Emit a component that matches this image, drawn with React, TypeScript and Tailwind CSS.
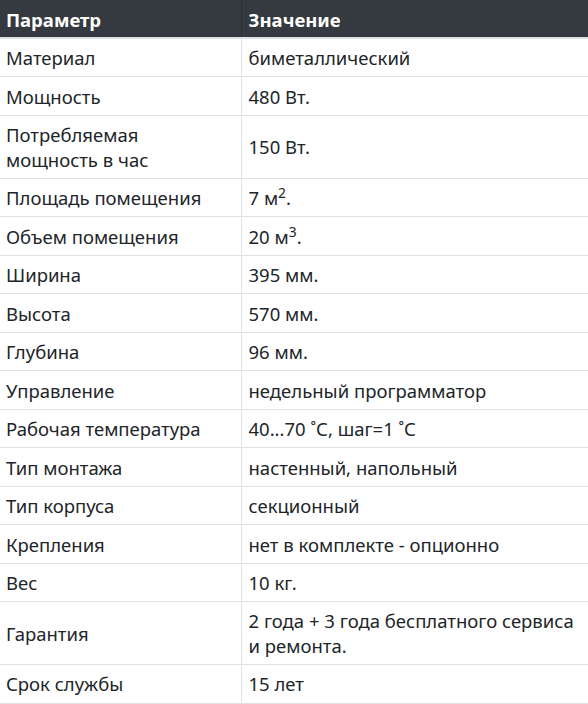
const rows: { name: string; value: React.ReactNode }[] = [
  { name: 'Материал', value: 'биметаллический' },
  { name: 'Мощность', value: '480 Вт.' },
  { name: 'Потребляемая мощность в час', value: '150 Вт.' },
  {
    name: 'Площадь помещения',
    value: (
      <>
        7 м<sup>2</sup>.
      </>
    ),
  },
  {
    name: 'Объем помещения',
    value: (
      <>
        20 м<sup>3</sup>.
      </>
    ),
  },
  { name: 'Ширина', value: '395 мм.' },
  { name: 'Высота', value: '570 мм.' },
  { name: 'Глубина', value: '96 мм.' },
  { name: 'Управление', value: 'недельный программатор' },
  { name: 'Рабочая температура', value: '40...70 ˚С, шаг=1 ˚С' },
  { name: 'Тип монтажа', value: 'настенный, напольный' },
  { name: 'Тип корпуса', value: 'секционный' },
  { name: 'Крепления', value: 'нет в комплекте - опционно' },
  { name: 'Вес', value: '10 кг.' },
  { name: 'Гарантия', value: '2 года + 3 года бесплатного сервиса и ремонта.' },
  { name: 'Срок службы', value: '15 лет' },
]

export default function App() {
  return (
    <div className="w-[588px] bg-white font-['Noto_Sans',sans-serif] text-[#212529]">
      <table className="w-full border-collapse table-fixed">
        <thead>
          <tr className="bg-[#343a40] text-white">
            <th className="w-[241px] text-left font-bold text-[18.5px] leading-[25px] px-[6px] pt-[7px] pb-[5px] border-b-2 border-[#dee2e6] border-r border-r-[#2a2f34]">
              Параметр
            </th>
            <th className="text-left font-bold text-[18.5px] leading-[25px] px-[7px] pt-[7px] pb-[5px] border-b-2 border-[#dee2e6]">
              Значение
            </th>
          </tr>
        </thead>
        <tbody>
          {rows.map((r) => (
            <tr key={r.name} className="border-b border-[#dee2e6]">
              <td className="align-middle text-[18.5px] leading-[24.5px] px-[6px] pt-[7.2px] pb-[5.8px] border-r border-[#dee2e6]">
                {r.name}
              </td>
              <td className="align-middle text-[18.5px] leading-[24.5px] px-[7px] pt-[7.2px] pb-[5.8px]">{r.value}</td>
            </tr>
          ))}
        </tbody>
      </table>
    </div>
  )
}
